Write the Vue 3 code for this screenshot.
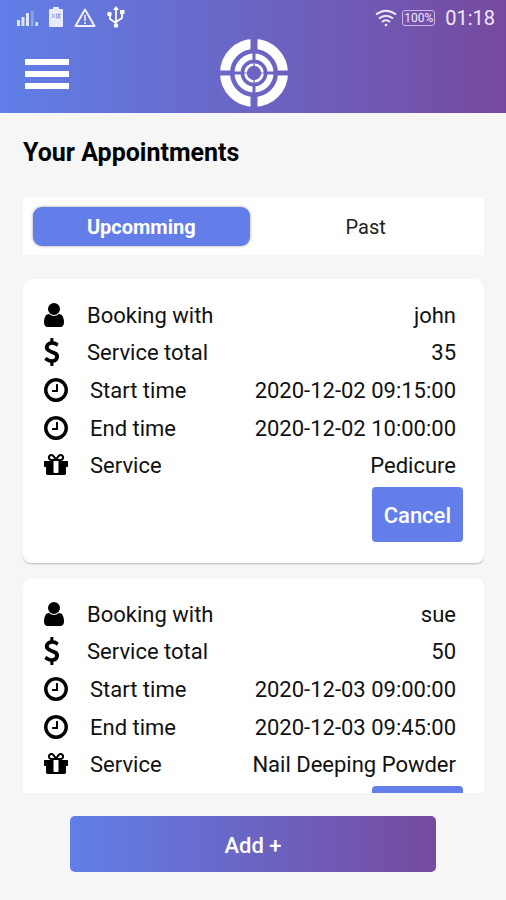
<script setup>
import { ref } from 'vue'

const tab = ref('upcoming')

const tabs = [
  { id: 'upcoming', label: 'Upcomming' },
  { id: 'past', label: 'Past' }
]

const icons = {
  user: {
    size: 'narrow',
    viewBox: '256 0 1344 1792',
    path: 'M1536 1399q0 109-62.5 187t-150.5 78h-854q-88 0-150.5-78t-62.5-187q0-85 8.5-160.5t31.5-152 58.5-131 94-89 134.5-34.5q131 128 313 128t313-128q76 0 134.5 34.5t94 89 58.5 131 31.5 152 8.5 160.5zm-256-887q0 159-112.5 271.5t-271.5 112.5-271.5-112.5-112.5-271.5 112.5-271.5 271.5-112.5 271.5 112.5 112.5 271.5z'
  },
  dollar: {
    size: 'narrow',
    viewBox: '400 0 1344 1792',
    path: 'M1362 1185q0 153-99.5 263.5t-258.5 136.5v175q0 14-9 23t-23 9h-135q-13 0-22.5-9.5t-9.5-22.5v-175q-66-9-127.5-31t-101.5-44.5-74-48-46.5-37.5-17.5-18q-17-21-2-41l103-135q7-10 23-12 15-2 24 9l2 2q113 99 243 125 37 8 74 8 81 0 142.5-43t61.5-122q0-28-15-53t-33.5-42-58.5-37.5-66-32-80-32.5q-39-16-61.5-25t-61.5-26.5-62.5-31-56.5-35.5-53.5-42.5-43.5-49-35.5-58-21-66.5-8.5-78q0-138 98-242t255-134v-180q0-13 9.5-22.5t22.5-9.5h135q14 0 23 9t9 23v176q57 6 110.5 23t87 33.5 63.5 37.5 39 29 15 14q17 18 5 38l-81 146q-8 15-23 16-14 3-27-7-3-3-14.5-12t-39-26.5-58.5-32-74.5-26-85.5-11.5q-95 0-155 43t-60 111q0 26 8.5 48t29.5 41.5 39.5 33 56 31 60.5 27 70 27.5q53 20 81 31.5t76 35 75.5 42.5 62 50 53 63.5 31.5 76.5 13 94z'
  },
  clock: {
    size: 'wide',
    viewBox: '128 0 1536 1792',
    path: 'M1024 544v448q0 14-9 23t-23 9h-320q-14 0-23-9t-9-23v-64q0-14 9-23t23-9h224v-352q0-14 9-23t23-9h64q14 0 23 9t9 23zm416 352q0-148-73-273t-198-198-273-73-273 73-198 198-73 273 73 273 198 198 273 73 273-73 198-198 73-273zm224 0q0 209-103 385.5t-279.5 279.5-385.5 103-385.5-103-279.5-279.5-103-385.5 103-385.5 279.5-279.5 385.5-103 385.5 103 279.5 279.5 103 385.5z'
  },
  gift: {
    size: 'wide',
    viewBox: '128 0 1536 1792',
    path: 'M1056 1356v-716h-320v716q0 25 18 38.5t46 13.5h192q28 0 46-13.5t18-38.5zm-456-844h195l-126-161q-26-31-69-31-40 0-68 28t-28 68 28 68 68 28zm688-96q0-40-28-68t-68-28q-43 0-69 31l-125 161h194q40 0 68-28t28-68zm376 256v320q0 14-9 23t-23 9h-96v416q0 40-28 68t-68 28h-1088q-40 0-68-28t-28-68v-416h-96q-14 0-23-9t-9-23v-320q0-14 9-23t23-9h440q-93 0-158.5-65.5t-65.5-158.5 65.5-158.5 158.5-65.5q107 0 168 77l128 165 128-165q61-77 168-77 93 0 158.5 65.5t65.5 158.5-65.5 158.5-158.5 65.5h440q14 0 23 9t9 23z'
  }
}

const fields = [
  { key: 'name', label: 'Booking with', icon: icons.user },
  { key: 'total', label: 'Service total', icon: icons.dollar },
  { key: 'start', label: 'Start time', icon: icons.clock },
  { key: 'end', label: 'End time', icon: icons.clock },
  { key: 'service', label: 'Service', icon: icons.gift }
]

const appointments = ref([
  {
    id: 1,
    name: 'john',
    total: 35,
    start: '2020-12-02 09:15:00',
    end: '2020-12-02 10:00:00',
    service: 'Pedicure'
  },
  {
    id: 2,
    name: 'sue',
    total: 50,
    start: '2020-12-03 09:00:00',
    end: '2020-12-03 09:45:00',
    service: 'Nail Deeping Powder'
  }
])

function cancel(id) {
  appointments.value = appointments.value.filter((a) => a.id !== id)
}
</script>

<template>
  <div class="screen">
    <header class="header">
      <div class="status">
        <div class="status-group left">
          <svg width="22" height="22" viewBox="0 0 22 22" fill="#fff">
            <path d="M1 14h3v6H1zM5.500 11h3v9h-3zM10 7h3v13h-3zM19.500 16h2.500v4h-2.500z" opacity=".8" />
            <path d="M15 5h2.500v15H15z" opacity=".3" />
          </svg>
          <svg width="14" height="22" viewBox="0 0 14 22">
            <path d="M4 1h6v2h3q1 0 1 1v16q0 1-1 1H1q-1 0-1-1V4q0-1 1-1h3z" fill="#fff" opacity=".85" />
            <path d="M3 8l3 4M6 8l-3 4M7.500 8v4h2V8zM12 8h-1.500v4H12" fill="none" stroke="#8a8fd0" stroke-width=".8" />
          </svg>
          <svg width="22" height="22" viewBox="0 0 22 22" fill="none" stroke="#f2f0ff">
            <path d="M11 3.500L20.500 20h-19z" stroke-width="2" stroke-linejoin="round" />
            <path d="M11 9v6M11 16v2" stroke-width="1.600" />
          </svg>
          <svg width="18" height="22" viewBox="0 0 18 22" fill="#fff">
            <path d="M9 3v15M9 17L3 13V9M9 16l6-4V7" fill="none" stroke="#fff" stroke-width="1.800" />
            <path d="M9 0l3 4H6z" />
            <circle cx="9" cy="19.500" r="2.200" />
            <circle cx="2.500" cy="8" r="2.300" />
            <path d="M13 4h4.500v4H13z" />
          </svg>
        </div>
        <div class="status-group right">
          <svg width="22" height="18" viewBox="0 0 22 18" fill="none" stroke="#f1e8fa" stroke-width="2">
            <path d="M1 5.500Q11-2 21 5.500M4 9.500Q11 4 18 9.500M7 13Q11 9.500 15 13" />
            <circle cx="11" cy="16" r="1.300" fill="#f1e8fa" stroke="none" />
          </svg>
          <span class="battery">100%</span>
          <time class="time">01:18</time>
        </div>
      </div>
      <div class="bar">
        <button class="menu" type="button" aria-label="Menu">
          <span></span>
          <span></span>
          <span></span>
        </button>
        <svg class="logo" width="68" height="70" viewBox="-34 -35 68 70">
          <defs>
            <mask id="cut-outer" maskUnits="userSpaceOnUse" x="-35" y="-35" width="70" height="70">
              <path d="M-35-35h70v70h-70z" fill="#fff" />
              <path d="M0-35v70" stroke="#000" stroke-width="7" />
              <path d="M-35 0h70" stroke="#000" stroke-width="5" />
            </mask>
            <mask id="cut-middle" maskUnits="userSpaceOnUse" x="-35" y="-35" width="70" height="70">
              <path d="M-35-35h70v70h-70z" fill="#fff" />
              <path d="M0-35v70M-35 0h70" stroke="#000" stroke-width="3" />
            </mask>
            <mask id="cut-inner" maskUnits="userSpaceOnUse" x="-35" y="-35" width="70" height="70">
              <path d="M-35-35h70v70h-70z" fill="#fff" />
              <path d="M0-35v70M-35 0h70" stroke="#000" stroke-width="1.200" />
            </mask>
          </defs>
          <g fill="none" stroke="#fff">
            <circle r="29" stroke-width="10" mask="url(#cut-outer)" />
            <circle r="16.500" stroke-width="6" mask="url(#cut-middle)" />
            <circle r="8.500" stroke-width="2.600" mask="url(#cut-inner)" />
          </g>
        </svg>
      </div>
    </header>

    <main class="content">
      <h1 class="title">Your Appointments</h1>

      <div class="tabs">
        <button
          v-for="t in tabs"
          :key="t.id"
          type="button"
          class="tab"
          :class="{ active: tab === t.id }"
          @click="tab = t.id"
        >
          {{ t.label }}
        </button>
      </div>

      <div class="list">
        <article v-for="item in appointments" :key="item.id" class="card">
          <dl class="fields">
            <div v-for="field in fields" :key="field.key" class="field">
              <dt>
                <svg class="icon" :class="field.icon.size" :viewBox="field.icon.viewBox">
                  <path :d="field.icon.path" />
                </svg>
                {{ field.label }}
              </dt>
              <dd>{{ item[field.key] }}</dd>
            </div>
          </dl>
          <button class="cancel" type="button" @click="cancel(item.id)">Cancel</button>
        </article>
      </div>
    </main>

    <footer class="footer">
      <button class="add" type="button">Add +</button>
    </footer>
  </div>
</template>

<style>
body {
  background: #f6f6f6;
}
</style>

<style scoped>
.screen {
  display: flex;
  flex-direction: column;
  height: 100vh;
  font-family: Roboto, sans-serif;
  color: #111;
  background: #f6f6f6;
}

button {
  border: 0;
  padding: 0;
  font-family: inherit;
  cursor: pointer;
}

.header {
  flex: none;
  padding-bottom: 3px;
  background: linear-gradient(90deg, #607fe8, #764a9f);
}

.status {
  display: flex;
  justify-content: space-between;
  align-items: center;
  height: 36px;
  padding: 0 11px 0 16px;
}

.status-group {
  display: flex;
  align-items: center;
}

.left {
  gap: 11px;
  padding-bottom: 2px;
}

.right {
  gap: 5px;
  color: #f1e8fa;
}

.battery {
  width: 31px;
  border: 1px solid #cdb9e2;
  border-radius: 3px;
  font-size: 12px;
  line-height: 14px;
  text-align: center;
}

.time {
  margin-left: 5px;
  font-size: 20px;
}

/* equal side columns keep the logo in the middle */
.bar {
  display: grid;
  grid-template-columns: 1fr auto 1fr;
  align-items: center;
  height: 74px;
  padding: 0 24px 0 25px;
}

.menu {
  display: flex;
  flex-direction: column;
  gap: 6px;
  width: 44px;
  padding-top: 2px;
  background: none;
}

.menu span {
  height: 6px;
  background: #fff;
}

.content {
  display: flex;
  flex-direction: column;
  flex: 1;
  min-height: 0;
  padding: 24px 22px 0 23px;
}

.title {
  margin: 0 0 29px;
  font-size: 25px;
  line-height: 32px;
  font-weight: 700;
  color: #000;
}

.tabs {
  display: flex;
  flex: none;
  gap: 8px;
  padding: 9px 10px;
  margin-bottom: 24px;
  background: #fff;
}

.tab {
  flex: 1;
  height: 39px;
  border-radius: 9px;
  font-size: 20px;
  font-weight: 400;
  color: #222;
  background: none;
}

.tab.active {
  font-weight: 700;
  color: #fff;
  background: #637de9;
  box-shadow: 0 0 3px rgba(0, 0, 0, 0.4);
}

.list {
  flex: 1;
  min-height: 0;
  overflow-y: auto;
  scrollbar-width: none;
}

.card {
  display: flex;
  flex-direction: column;
  padding: 18px 21px 21px;
  margin-bottom: 15px;
  border-radius: 8px;
  background: #fff;
  box-shadow: 0 1px 2px rgba(0, 0, 0, 0.25);
}

.fields {
  display: grid;
  grid-template-rows: repeat(5, 1fr);
  height: 188px;
  margin: 0 0 2px;
  padding-right: 7px;
}

.field {
  display: flex;
  justify-content: space-between;
  align-items: center;
  font-size: 22px;
  line-height: 28px;
}

dt {
  display: flex;
  align-items: center;
  gap: 22px;
}

dd {
  margin: 0;
}

.icon {
  height: 28px;
  margin-bottom: 2px;
  fill: #000;
}

.narrow {
  width: 21px;
}

.wide {
  width: 24px;
}

.cancel {
  align-self: flex-end;
  height: 55px;
  padding: 2px 12px 0;
  border-radius: 4px;
  font-size: 22px;
  font-weight: 500;
  color: #fff;
  background: #637de9;
}

.footer {
  flex: none;
  padding: 23px 70px 28px;
}

.add {
  display: block;
  width: 100%;
  height: 56px;
  padding-top: 2px;
  border-radius: 5px;
  font-size: 22px;
  font-weight: 500;
  color: #fff;
  background: linear-gradient(90deg, #607fe8, #764a9f);
}
</style>
